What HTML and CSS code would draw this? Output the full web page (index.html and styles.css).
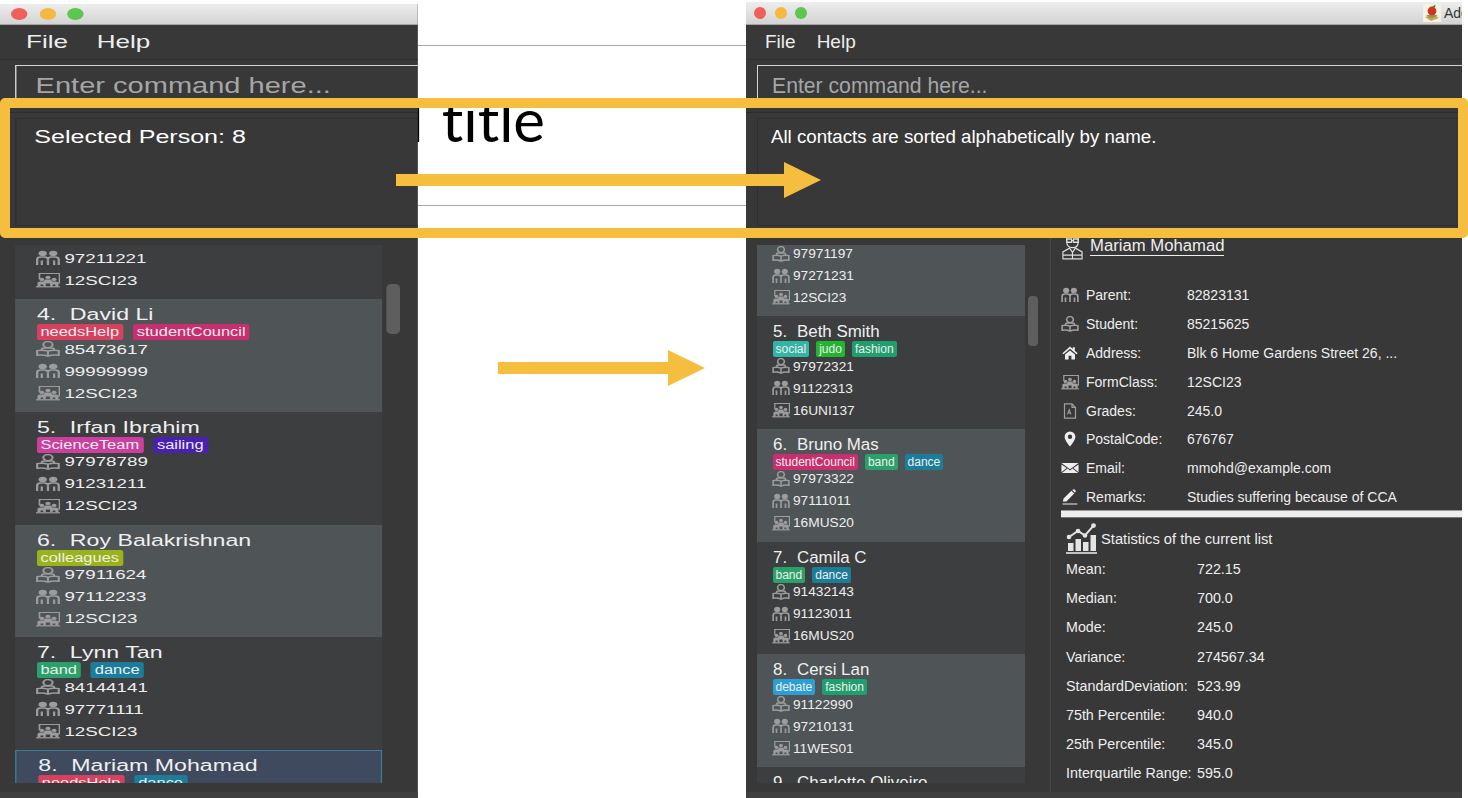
FILE: index.html
```html
<!DOCTYPE html>
<html lang="en">
<head>
  <meta charset="utf-8">
  <title>Sort command slide</title>
  <link rel="stylesheet" href="styles.css">
</head>
<body>

<!-- icon set -->
<svg class="sprite" aria-hidden="true">
  <symbol id="i-student" viewBox="0 0 16 16" preserveAspectRatio="none">
    <g fill="none" stroke="currentColor" stroke-width="1.4">
      <circle cx="8" cy="3.6" r="3"/>
      <path d="M4 9.4V8.4Q4 7 5.6 7H10.4Q12 7 12 8.4V9.4"/>
      <path d="M8 10.2Q5 8.8 1 9.6V14.2Q5 13.4 8 15.2Q11 13.4 15 14.2V9.6Q11 8.8 8 10.2ZM8 10.2V15"/>
    </g>
  </symbol>
  <symbol id="i-parent" viewBox="0 0 16 16" preserveAspectRatio="none">
    <g fill="currentColor">
      <circle cx="4.6" cy="3.4" r="2.7"/>
      <circle cx="11.4" cy="3.4" r="2.7"/>
    </g>
    <g fill="none" stroke="currentColor" stroke-width="1.5">
      <path d="M1 15V9.4Q1 7 3.4 7H5.8Q8 7 8 9.4Q8 7 10.2 7H12.6Q15 7 15 9.4V15"/>
      <path d="M4 15V10.6M8 9.4V15M12 15V10.6"/>
    </g>
  </symbol>
  <symbol id="i-class" viewBox="0 0 16 16" preserveAspectRatio="none">
    <path fill="none" stroke="currentColor" stroke-width="1.1" d="M2.5 7V1.5H15.5V11H14"/>
    <g fill="currentColor">
      <circle cx="4" cy="7.4" r="1.6"/><circle cx="8" cy="5.4" r="1.7"/><circle cx="12" cy="7.4" r="1.6"/>
      <path d="M1.2 14.5V11Q1.2 9.4 3 9.4H5.2L6 7.6H10L10.8 9.4H13Q14.8 9.4 14.8 11V14.5H12.8V12.6H11V14.5H9.4V11.6H6.6V14.5H5V12.6H3.2V14.5Z"/>
      <rect x="0.2" y="14.2" width="15.6" height="1.2"/>
    </g>
  </symbol>
  <symbol id="i-teacher" viewBox="0 0 24 26" preserveAspectRatio="none">
    <g fill="none" stroke="currentColor" stroke-width="1.2">
      <path d="M6 2H18V9Q18 14.5 12 14.5Q6 14.5 6 9Z"/>
      <path d="M6 6.5H11V9.5H6ZM13 6.5H18V9.5H13ZM11 8H13"/>
      <path d="M9 15L2 18.5V25H22V18.5L15 15L12 19Z"/>
      <path d="M2 21.5H22M12 19V25"/>
    </g>
  </symbol>
  <symbol id="i-home" viewBox="0 0 16 16">
    <path fill="currentColor" d="M8 1.6L0.4 8.2L1.5 9.3L8 3.8L14.5 9.3L15.6 8.2L12.8 5.8V2.2H10.8V4.1ZM3 9.6V14.6H6.6V10.8H9.4V14.6H13V9.6L8 5.4Z"/>
  </symbol>
  <symbol id="i-grade" viewBox="0 0 16 16">
    <path fill="none" stroke="currentColor" stroke-width="1.2" d="M2.5 0.8H10L13.5 4.4V15.2H2.5ZM10 0.8V4.4H13.5"/>
    <path fill="none" stroke="currentColor" stroke-width="1.1" d="M5.4 11.4L7.2 6.8L9 11.4M6 10H8.4"/>
  </symbol>
  <symbol id="i-pin" viewBox="0 0 16 16">
    <path fill="currentColor" fill-rule="evenodd" d="M8 0.4A5.4 5.4 0 0 0 2.6 5.8C2.6 9.4 8 15.6 8 15.6S13.4 9.4 13.4 5.8A5.4 5.4 0 0 0 8 0.4ZM8 3.6A2.2 2.2 0 1 1 8 8A2.2 2.2 0 0 1 8 3.6Z"/>
  </symbol>
  <symbol id="i-mail" viewBox="0 0 16 16" preserveAspectRatio="none">
    <path fill="currentColor" d="M0.4 3H15.6L8 9.2ZM0.4 4.4V12.2L5 7.9ZM15.6 4.4V12.2L11 7.9ZM0.8 13H15.2L10.2 8.6L8 10.5L5.8 8.6Z"/>
  </symbol>
  <symbol id="i-pen" viewBox="0 0 16 16">
    <path fill="currentColor" d="M0.8 12.6L1.6 9.6L9.4 1.8L12.2 4.6L4.4 12.4ZM10.3 1L11.4 0.3Q12 0 12.5 0.5L13.6 1.6Q14 2.1 13.7 2.6L13 3.8ZM0.6 14.4H15.4V15.4H0.6Z"/>
  </symbol>
  <symbol id="i-stats" viewBox="0 0 31 31">
    <g fill="currentColor">
      <rect x="2" y="20" width="5.5" height="8"/>
      <rect x="9.5" y="16" width="5.5" height="12"/>
      <rect x="17" y="19" width="5.5" height="9"/>
      <rect x="24.5" y="12" width="5.5" height="16"/>
      <rect x="0" y="29.2" width="31" height="1.6"/>
      <circle cx="3" cy="14" r="2.3"/><circle cx="12" cy="8" r="2.3"/><circle cx="19" cy="12.5" r="2.3"/><circle cx="27.5" cy="2.6" r="2.4"/>
    </g>
    <path fill="none" stroke="currentColor" stroke-width="2" d="M3 14L12 8L19 12.5L27.5 2.6"/>
  </symbol>
</svg>

<!-- slide behind the two screenshots -->
<div class="slide-line line-top"></div>
<div class="slide-line line-bottom"></div>
<div class="slide-title">Click to add title</div>

<!-- before -->
<div class="win win-left">
  <div class="titlebar">
    <span class="dot red"></span><span class="dot amber"></span><span class="dot green"></span>
  </div>
  <div class="menubar"><span>File</span><span>Help</span></div>
  <div class="command-pane"><div class="command-box">Enter command here...</div></div>
  <div class="result-pane"><div class="result-box">Selected Person: 8</div></div>
  <div class="main">
    <div class="list-pane">
      <div class="list">
        <div class="card partial-left">
          <div class="row"><svg class="ico"><use href="#i-parent"/></svg>97211221</div>
          <div class="row"><svg class="ico"><use href="#i-class"/></svg>12SCI23</div>
        </div>
        <div class="card card-alt">
          <div class="name"><span class="num">4.</span>David Li</div>
          <div class="tags"><span class="tag t-needs">needsHelp</span><span class="tag t-council">studentCouncil</span></div>
          <div class="row"><svg class="ico"><use href="#i-student"/></svg>85473617</div>
          <div class="row"><svg class="ico"><use href="#i-parent"/></svg>99999999</div>
          <div class="row"><svg class="ico"><use href="#i-class"/></svg>12SCI23</div>
        </div>
        <div class="card">
          <div class="name"><span class="num">5.</span>Irfan Ibrahim</div>
          <div class="tags"><span class="tag t-science">ScienceTeam</span><span class="tag t-sailing">sailing</span></div>
          <div class="row"><svg class="ico"><use href="#i-student"/></svg>97978789</div>
          <div class="row"><svg class="ico"><use href="#i-parent"/></svg>91231211</div>
          <div class="row"><svg class="ico"><use href="#i-class"/></svg>12SCI23</div>
        </div>
        <div class="card card-alt">
          <div class="name"><span class="num">6.</span>Roy Balakrishnan</div>
          <div class="tags"><span class="tag t-colleagues">colleagues</span></div>
          <div class="row"><svg class="ico"><use href="#i-student"/></svg>97911624</div>
          <div class="row"><svg class="ico"><use href="#i-parent"/></svg>97112233</div>
          <div class="row"><svg class="ico"><use href="#i-class"/></svg>12SCI23</div>
        </div>
        <div class="card">
          <div class="name"><span class="num">7.</span>Lynn Tan</div>
          <div class="tags"><span class="tag t-band">band</span><span class="tag t-dance">dance</span></div>
          <div class="row"><svg class="ico"><use href="#i-student"/></svg>84144141</div>
          <div class="row"><svg class="ico"><use href="#i-parent"/></svg>97771111</div>
          <div class="row"><svg class="ico"><use href="#i-class"/></svg>12SCI23</div>
        </div>
        <div class="card selected">
          <div class="name"><span class="num">8.</span>Mariam Mohamad</div>
          <div class="tags"><span class="tag t-needs">needsHelp</span><span class="tag t-dance">dance</span></div>
        </div>
      </div>
      <div class="scroll-track"><div class="thumb thumb-left"></div></div>
    </div>
  </div>
  <div class="statusbar"></div>
</div>

<!-- after -->
<div class="win win-right">
  <div class="titlebar">
    <span class="dot red"></span><span class="dot amber"></span><span class="dot green"></span>
    <span class="app-title">
      <svg class="app-icon" viewBox="0 0 18 18">
        <rect width="18" height="18" fill="#f4f1e6"/>
        <path fill="#d9a441" d="M2 13L10 11L16 14L8 17Z"/>
        <path fill="#8a9a5b" d="M3 11.5L10 9.5L15 12L8 14.5Z"/>
        <circle cx="9" cy="7" r="4.4" fill="#d6301f"/>
        <path fill="#3d8a2e" d="M9 3L12.5 0.6L12 3.4Z"/>
      </svg>Addressbook
    </span>
  </div>
  <div class="menubar"><span>File</span><span>Help</span></div>
  <div class="command-pane"><div class="command-box">Enter command here...</div></div>
  <div class="result-pane"><div class="result-box">All contacts are sorted alphabetically by name.</div></div>
  <div class="main">
    <div class="list-pane">
      <div class="list">
        <div class="card card-alt partial-right">
          <div class="row"><svg class="ico"><use href="#i-student"/></svg>97971197</div>
          <div class="row"><svg class="ico"><use href="#i-parent"/></svg>97271231</div>
          <div class="row"><svg class="ico"><use href="#i-class"/></svg>12SCI23</div>
        </div>
        <div class="card">
          <div class="name"><span class="num">5.</span>Beth Smith</div>
          <div class="tags"><span class="tag t-social">social</span><span class="tag t-judo">judo</span><span class="tag t-fashion">fashion</span></div>
          <div class="row"><svg class="ico"><use href="#i-student"/></svg>97972321</div>
          <div class="row"><svg class="ico"><use href="#i-parent"/></svg>91122313</div>
          <div class="row"><svg class="ico"><use href="#i-class"/></svg>16UNI137</div>
        </div>
        <div class="card card-alt">
          <div class="name"><span class="num">6.</span>Bruno Mas</div>
          <div class="tags"><span class="tag t-council">studentCouncil</span><span class="tag t-band">band</span><span class="tag t-dance">dance</span></div>
          <div class="row"><svg class="ico"><use href="#i-student"/></svg>97973322</div>
          <div class="row"><svg class="ico"><use href="#i-parent"/></svg>97111011</div>
          <div class="row"><svg class="ico"><use href="#i-class"/></svg>16MUS20</div>
        </div>
        <div class="card">
          <div class="name"><span class="num">7.</span>Camila C</div>
          <div class="tags"><span class="tag t-band">band</span><span class="tag t-dance">dance</span></div>
          <div class="row"><svg class="ico"><use href="#i-student"/></svg>91432143</div>
          <div class="row"><svg class="ico"><use href="#i-parent"/></svg>91123011</div>
          <div class="row"><svg class="ico"><use href="#i-class"/></svg>16MUS20</div>
        </div>
        <div class="card card-alt">
          <div class="name"><span class="num">8.</span>Cersi Lan</div>
          <div class="tags"><span class="tag t-debate">debate</span><span class="tag t-fashion">fashion</span></div>
          <div class="row"><svg class="ico"><use href="#i-student"/></svg>91122990</div>
          <div class="row"><svg class="ico"><use href="#i-parent"/></svg>97210131</div>
          <div class="row"><svg class="ico"><use href="#i-class"/></svg>11WES01</div>
        </div>
        <div class="card">
          <div class="name"><span class="num">9.</span>Charlotte Oliveiro</div>
        </div>
      </div>
      <div class="scroll-track"><div class="thumb thumb-right"></div></div>
    </div>

    <div class="detail-pane">
      <div class="person">
        <svg class="person-ico"><use href="#i-teacher"/></svg>
        <span class="person-name">Mariam Mohamad</span>
      </div>
      <div class="fields">
        <svg class="f-ico dim"><use href="#i-parent"/></svg><span>Parent:</span><span>82823131</span>
        <svg class="f-ico dim"><use href="#i-student"/></svg><span>Student:</span><span>85215625</span>
        <svg class="f-ico"><use href="#i-home"/></svg><span>Address:</span><span>Blk 6 Home Gardens Street 26, ...</span>
        <svg class="f-ico dim"><use href="#i-class"/></svg><span>FormClass:</span><span>12SCI23</span>
        <svg class="f-ico dim"><use href="#i-grade"/></svg><span>Grades:</span><span>245.0</span>
        <svg class="f-ico"><use href="#i-pin"/></svg><span>PostalCode:</span><span>676767</span>
        <svg class="f-ico"><use href="#i-mail"/></svg><span>Email:</span><span>mmohd@example.com</span>
        <svg class="f-ico"><use href="#i-pen"/></svg><span>Remarks:</span><span>Studies suffering because of CCA</span>
      </div>
      <div class="split-bar"></div>
      <div class="stats-head">
        <svg class="stats-ico"><use href="#i-stats"/></svg>
        <span>Statistics of the current list</span>
      </div>
      <div class="stats">
        <span>Mean:</span><span>722.15</span>
        <span>Median:</span><span>700.0</span>
        <span>Mode:</span><span>245.0</span>
        <span>Variance:</span><span>274567.34</span>
        <span>StandardDeviation:</span><span>523.99</span>
        <span>75th Percentile:</span><span>940.0</span>
        <span>25th Percentile:</span><span>345.0</span>
        <span>Interquartile Range:</span><span>595.0</span>
      </div>
    </div>
  </div>
  <div class="statusbar"></div>
</div>

<!-- callouts on top -->
<div class="callout"></div>
<svg class="arrow arrow-long" viewBox="0 0 425 36"><path d="M0 12H388V0L425 18L388 36V24H0Z"/></svg>
<svg class="arrow arrow-short" viewBox="0 0 207 36"><path d="M0 12H170V0L207 18L170 36V24H0Z"/></svg>

</body>
</html>
```

FILE: styles.css
```css
/* page */
html, body {
  margin: 0;
  height: 100%;
  overflow: hidden;
  background-color: #FFF;
  font-family: "Liberation Sans", Arial, sans-serif;
}

.sprite {
  position: absolute;
  width: 0;
  height: 0;
}

/* slide placeholder */
.slide-line {
  position: absolute;
  left: 418px;
  width: 328px;
  height: 1px;
  background-color: #A9A9A9;
}

.line-top { top: 45px; }
.line-bottom { top: 205px; }

.slide-title {
  position: absolute;
  left: 0;
  top: 83px;
  width: 545px;
  text-align: right;
  white-space: nowrap;
  font-family: Lato, "Liberation Sans", sans-serif;
  font-size: 60px;
  font-variant-ligatures: none;
  word-spacing: 3px;
  line-height: 72px;
  color: #000;
}

/* app windows */
.win {
  position: absolute;
  left: 0;
  bottom: 0;
  display: flex;
  flex-direction: column;
  overflow: hidden;
  background-color: #383838;
  color: #EEE;
}

.win-left {
  top: 4px;
  width: 305px;
  transform: scaleX(1.37);
  transform-origin: left top;
}

.win-right {
  left: 746px;
  top: 2px;
  width: 716px;
}

.titlebar {
  flex: 0 0 auto;
  height: 21px;
  display: flex;
  align-items: center;
  padding-left: 8px;
  gap: 8.5px;
  box-sizing: border-box;
  border-bottom: 1px solid #A4A4A4;
  background: linear-gradient(#EDEDED, #D3D3D3);
}

.win-right .titlebar {
  height: 23px;
}

.dot {
  width: 12px;
  height: 12px;
  border-radius: 50%;
}

.red { background-color: #F0605A; }
.amber { background-color: #F5B942; }
.green { background-color: #5CC64E; }

.app-title {
  margin-left: auto;
  display: flex;
  align-items: center;
  width: 39px;
  flex: 0 0 39px;
  overflow: hidden;
  white-space: nowrap;
  font-size: 14px;
  color: #333;
}

.app-icon {
  flex: 0 0 18px;
  width: 18px;
  height: 18px;
  margin-right: 3px;
}

.menubar {
  flex: 0 0 35px;
  box-sizing: border-box;
  display: flex;
  align-items: center;
  gap: 21px;
  padding-left: 19px;
  border-bottom: 1px solid #2F2F2F;
  font-size: 19px;
  color: #EEE;
}

.command-pane {
  flex: 0 0 53px;
  box-sizing: border-box;
  padding: 5px 0 0 11px;
  border-bottom: 1px solid #2C2C2C;
}

.command-box {
  height: 43px;
  margin-right: -10px;
  box-sizing: border-box;
  padding: 8px 14px;
  border: 1px solid #D6D6D6;
  font-size: 21.2px;
  line-height: 24px;
  color: #A6A6A6;
}

.result-pane {
  flex: 0 0 119px;
  box-sizing: border-box;
  padding: 5px 0 0 11px;
}

.result-box {
  height: 108px;
  margin-right: -10px;
  box-sizing: border-box;
  padding: 7px 13px;
  border: 1px solid #2F2F2F;
  font-size: 18.7px;
  line-height: 22px;
  color: #FFF;
}

.win-left .result-box {
  font-size: 18.3px;
}

.main {
  flex: 1;
  display: flex;
  min-height: 0;
}

.statusbar {
  flex: 0 0 6px;
  background-color: #3F3F3F;
}

/* person list */
.list-pane {
  flex: 0 0 304px;
  box-sizing: border-box;
  display: flex;
  padding: 13px 0 9px 11px;
}

.list {
  width: 268px;
  overflow: hidden;
  background-color: #3C3E3F;
}

.card {
  height: 112.75px;
  box-sizing: border-box;
  padding: 6px 0 0 15px;
  background-color: #3C3E3F;
}

.card.card-alt {
  background-color: #4F5457;
}

.card.selected {
  padding: 5px 0 0 15px;
  border: 1px solid #3B7D96;
  background-color: #3F4A5E;
}

.partial-left,
.partial-right {
  display: flex;
  flex-direction: column;
  justify-content: flex-end;
  padding-top: 0;
  padding-bottom: 9.75px;
}

.partial-left { height: 54px; }
.partial-right { height: 71px; }

.name {
  display: flex;
  height: 19px;
  font-size: 16.9px;
  line-height: 20px;
  color: #F0F0F0;
}

.num {
  width: 25px;
  padding-left: 1px;
  box-sizing: border-box;
}

.tags {
  display: flex;
  gap: 7px;
  height: 16px;
  margin-left: 0.5px;
}

.tag {
  padding: 0 3px;
  border-radius: 2px;
  font-size: 12px;
  line-height: 16px;
  color: #EEE;
}

.t-needs { background-color: #D8405F; }
.t-council { background-color: #C92E6F; }
.t-science { background-color: #CB3F9E; }
.t-sailing { background-color: #4A1FB3; }
.t-colleagues { background-color: #9AB31A; }
.t-band { background-color: #2AA06A; }
.t-dance { background-color: #1C7D9A; }
.t-social { background-color: #33B5A5; }
.t-judo { background-color: #22B52F; }
.t-fashion { background-color: #1F9E6E; }
.t-debate { background-color: #2B9FD5; }

.row {
  display: flex;
  align-items: center;
  gap: 3px;
  height: 18px;
  margin-bottom: 4px;
  font-size: 13.7px;
  color: #EEE;
}

.partial-left .row:last-child,
.partial-right .row:last-child {
  margin-bottom: 0;
}

.ico {
  flex: 0 0 18px;
  width: 18px;
  height: 16px;
  color: #9C9C9C;
}

.scroll-track {
  width: 10px;
  margin-left: 3px;
}

.thumb {
  height: 50px;
  border-radius: 4px;
  background-color: #5E5E5E;
}

.thumb-left { margin-top: 39px; }
.thumb-right { margin-top: 51px; }

/* person detail */
.detail-pane {
  flex: 1;
  min-width: 0;
  box-sizing: border-box;
  padding-left: 10px;
  border-left: 1px solid #484848;
  font-size: 14px;
  color: #EEE;
}

.person {
  display: flex;
  align-items: center;
  gap: 6px;
  height: 28px;
  margin-bottom: 21px;
}

.person-ico {
  flex: 0 0 23px;
  width: 23px;
  height: 28px;
  color: #DDD;
}

.person-name {
  font-size: 16.7px;
  line-height: 18px;
  border-bottom: 1px solid #EEE;
}

.fields {
  display: grid;
  grid-template-columns: 25px 101px 1fr;
  grid-auto-rows: 28.8px;
  align-items: center;
}

.f-ico {
  width: 18px;
  height: 16px;
  color: #EEE;
}

.f-ico.dim {
  color: #A0A0A0;
}

.split-bar {
  height: 8px;
  box-sizing: border-box;
  margin-top: -1px;
  border-top: 1px solid #999;
  border-bottom: 1px solid #777;
  background-color: #EEE;
}

.stats-head {
  display: flex;
  align-items: center;
  gap: 4px;
  height: 31px;
  margin: 5px 0 0 5px;
  font-size: 14.7px;
}

.stats-ico {
  flex: 0 0 31px;
  width: 31px;
  height: 31px;
  color: #E4E4E4;
}

.stats {
  display: grid;
  grid-template-columns: 131px 1fr;
  grid-auto-rows: 29.2px;
  align-items: center;
  margin-left: 5px;
  font-size: 14.3px;
}

/* yellow callouts */
.callout {
  position: absolute;
  left: 0;
  top: 98px;
  width: 1468px;
  height: 140px;
  box-sizing: border-box;
  border: 10px solid #F6BE3F;
  border-radius: 5px;
}

.arrow {
  position: absolute;
  fill: #F6BE3F;
}

.arrow-long {
  left: 396px;
  top: 162px;
  width: 425px;
  height: 36px;
}

.arrow-short {
  left: 498px;
  top: 350px;
  width: 207px;
  height: 36px;
}
```
